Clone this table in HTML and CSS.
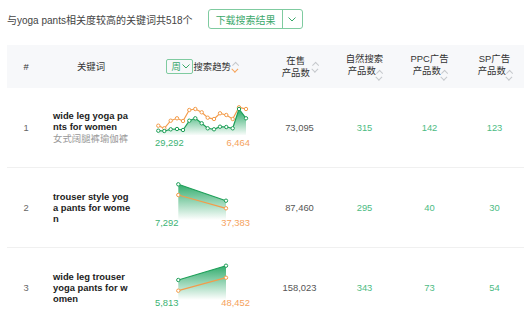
FILE: index.html
```html
<!DOCTYPE html>
<html lang="zh">
<head>
<meta charset="utf-8">
<link rel="stylesheet" href="styles.css">
</head>
<body>
<div class="page">
  <div class="top">
    <span class="summary">与yoga pants相关度较高的关键词共518个</span>
    <div class="dl">
      <span class="dl-main">下载搜索结果</span>
      <span class="dl-arrow"><svg width="8" height="5" viewBox="0 0 8 5"><path d="M0.5 0.5 L4 4 L7.5 0.5" fill="none" stroke="#3aa86a" stroke-width="1"/></svg></span>
    </div>
  </div>

  <div class="table">
    <div class="row head">
      <div class="c c-num">#</div>
      <div class="c c-center">关键词</div>
      <div class="c c-center trend-h">
        <span class="week">周<svg width="8" height="5" viewBox="0 0 8 5"><path d="M0.5 0.5 L4 4 L7.5 0.5" fill="none" stroke="#3aa86a" stroke-width="1"/></svg></span><span>搜索趋势</span><span class="sort active"><i class="up"></i><i class="down"></i></span>
      </div>
      <div class="c c-center"><span class="h2">在售<br>产品数</span><span class="sort mid"><i class="up"></i><i class="down"></i></span></div>
      <div class="c c-center"><span class="h2">自然搜索<br>产品数<span class="sort"><i class="up"></i><i class="down"></i></span></span></div>
      <div class="c c-center"><span class="h2">PPC广告<br>产品数<span class="sort"><i class="up"></i><i class="down"></i></span></span></div>
      <div class="c c-center"><span class="h2">SP广告<br>产品数<span class="sort"><i class="up"></i><i class="down"></i></span></span></div>
    </div>

    <div class="row">
      <div class="c c-num idx">1</div>
      <div class="c c-kw"><div class="kw">wide leg yoga pants for women</div><div class="kw-cn">女式阔腿裤瑜伽裤</div></div>
      <div class="c c-center">
        <div class="chart">
          <svg width="96" height="33" viewBox="0 0 96 33">
            <defs><linearGradient id="g1" x1="0" y1="0" x2="0" y2="1"><stop offset="0" stop-color="#1aa35c" stop-opacity="0.95"/><stop offset="1" stop-color="#1aa35c" stop-opacity="0.03"/></linearGradient></defs>
            <path d="M4.3,26.7 L10.3,27 L16.7,25.3 L23,25 L29,26 L35.3,16.7 L41.3,14.3 L47.7,19.3 L53.7,24.3 L60,25.3 L66,22.7 L72.3,23 L78.7,24.3 L85,5 L92,14.3 L92,31 L4.3,31 Z" fill="url(#g1)"/>
            <polyline points="4.3,21.7 10.3,24.3 16.7,16.7 23,14.3 29,17 35.3,6 41.3,5 47.7,8.3 53.7,13.7 60,15 66,9.3 72.3,11 78.7,15 85,3.3 92,5" fill="none" stroke="#f39c4b" stroke-width="1.2"/>
            <polyline points="4.3,26.7 10.3,27 16.7,25.3 23,25 29,26 35.3,16.7 41.3,14.3 47.7,19.3 53.7,24.3 60,25.3 66,22.7 72.3,23 78.7,24.3 85,5 92,14.3" fill="none" stroke="#1e9f58" stroke-width="1.2"/>
            <g fill="#fff" stroke="#f39c4b" stroke-width="1">
              <circle cx="4.3" cy="21.7" r="1.7"/><circle cx="10.3" cy="24.3" r="1.7"/><circle cx="16.7" cy="16.7" r="1.7"/><circle cx="23" cy="14.3" r="1.7"/><circle cx="29" cy="17" r="1.7"/><circle cx="35.3" cy="6" r="1.7"/><circle cx="41.3" cy="5" r="1.7"/><circle cx="47.7" cy="8.3" r="1.7"/><circle cx="53.7" cy="13.7" r="1.7"/><circle cx="60" cy="15" r="1.7"/><circle cx="66" cy="9.3" r="1.7"/><circle cx="72.3" cy="11" r="1.7"/><circle cx="78.7" cy="15" r="1.7"/><circle cx="85" cy="3.3" r="1.7"/><circle cx="92" cy="5" r="1.7"/>
            </g>
            <g fill="#fff" stroke="#1e9f58" stroke-width="1">
              <circle cx="4.3" cy="26.7" r="1.7"/><circle cx="10.3" cy="27" r="1.7"/><circle cx="16.7" cy="25.3" r="1.7"/><circle cx="23" cy="25" r="1.7"/><circle cx="29" cy="26" r="1.7"/><circle cx="35.3" cy="16.7" r="1.7"/><circle cx="41.3" cy="14.3" r="1.7"/><circle cx="47.7" cy="19.3" r="1.7"/><circle cx="53.7" cy="24.3" r="1.7"/><circle cx="60" cy="25.3" r="1.7"/><circle cx="66" cy="22.7" r="1.7"/><circle cx="72.3" cy="23" r="1.7"/><circle cx="78.7" cy="24.3" r="1.7"/><circle cx="85" cy="5" r="1.7"/><circle cx="92" cy="14.3" r="1.7"/>
            </g>
          </svg>
          <div class="labels"><span class="lg">29,292</span><span class="lo">6,464</span></div>
        </div>
      </div>
      <div class="c c-center val">73,095</div>
      <div class="c c-center val g">315</div>
      <div class="c c-center val g">142</div>
      <div class="c c-center val g">123</div>
    </div>

    <div class="row">
      <div class="c c-num idx">2</div>
      <div class="c c-kw"><div class="kw">trouser style yoga pants for women</div></div>
      <div class="c c-center">
        <div class="chart">
          <svg width="96" height="33" viewBox="0 0 96 33">
            <defs><linearGradient id="g2" x1="0" y1="0" x2="0" y2="1"><stop offset="0" stop-color="#1aa35c" stop-opacity="0.9"/><stop offset="1" stop-color="#1aa35c" stop-opacity="0"/></linearGradient></defs>
            <path d="M24.3,0.3 L72,16.7 L72,36 L24.3,36 Z" fill="url(#g2)"/>
            <line x1="24.3" y1="11" x2="72" y2="24.3" stroke="#f39c4b" stroke-width="1.2"/>
            <line x1="24.3" y1="0.3" x2="72" y2="16.7" stroke="#1e9f58" stroke-width="1.2"/>
            <g fill="#fff" stroke="#f39c4b" stroke-width="1"><circle cx="24.3" cy="11" r="1.7"/><circle cx="72" cy="24.3" r="1.7"/></g>
            <g fill="#fff" stroke="#1e9f58" stroke-width="1"><circle cx="24.3" cy="0.3" r="1.7"/><circle cx="72" cy="16.7" r="1.7"/></g>
          </svg>
          <div class="labels"><span class="lg">7,292</span><span class="lo">37,383</span></div>
        </div>
      </div>
      <div class="c c-center val">87,460</div>
      <div class="c c-center val g">295</div>
      <div class="c c-center val g">40</div>
      <div class="c c-center val g">30</div>
    </div>

    <div class="row">
      <div class="c c-num idx">3</div>
      <div class="c c-kw"><div class="kw">wide leg trouser yoga pants for women</div></div>
      <div class="c c-center">
        <div class="chart">
          <svg width="96" height="33" viewBox="0 0 96 33">
            <defs><linearGradient id="g3" x1="0" y1="0" x2="0" y2="1"><stop offset="0" stop-color="#1aa35c" stop-opacity="0.9"/><stop offset="1" stop-color="#1aa35c" stop-opacity="0"/></linearGradient></defs>
            <path d="M24.3,16 L72,1.7 L72,36 L24.3,36 Z" fill="url(#g3)"/>
            <line x1="24.3" y1="26.7" x2="72" y2="13.7" stroke="#f39c4b" stroke-width="1.2"/>
            <line x1="24.3" y1="16" x2="72" y2="1.7" stroke="#1e9f58" stroke-width="1.2"/>
            <g fill="#fff" stroke="#f39c4b" stroke-width="1"><circle cx="24.3" cy="26.7" r="1.7"/><circle cx="72" cy="13.7" r="1.7"/></g>
            <g fill="#fff" stroke="#1e9f58" stroke-width="1"><circle cx="24.3" cy="16" r="1.7"/><circle cx="72" cy="1.7" r="1.7"/></g>
          </svg>
          <div class="labels"><span class="lg">5,813</span><span class="lo">48,452</span></div>
        </div>
      </div>
      <div class="c c-center val">158,023</div>
      <div class="c c-center val g">343</div>
      <div class="c c-center val g">73</div>
      <div class="c c-center val g">54</div>
    </div>
  </div>
</div>
</body>
</html>
```

FILE: styles.css
```css
html, body {
  margin: 0;
  padding: 0;
  background: #fff;
  overflow: hidden;
}
body {
  font-family: "Liberation Sans", "Noto Sans CJK SC", sans-serif;
  color: #333;
}
.page {
  width: 524px;
  height: 327px;
  overflow: hidden;
  padding-left: 7px;
  box-sizing: border-box;
}
.top {
  display: flex;
  align-items: center;
  height: 20px;
  padding-top: 9px;
  gap: 15px;
}
.summary {
  font-size: 10px;
  color: #444;
  white-space: nowrap;
}
.dl {
  display: flex;
  height: 20px;
  box-sizing: border-box;
  border: 1px solid #7fcba0;
  border-radius: 3px;
  color: #3aa86a;
  font-size: 10px;
}
.dl-main {
  display: flex;
  align-items: center;
  padding: 0 6px 0 7px;
  border-right: 1px solid #7fcba0;
}
.dl-arrow {
  display: flex;
  align-items: center;
  justify-content: center;
  width: 19px;
}
.table {
  margin-top: 16px;
  width: 520px;
}
.row {
  display: grid;
  grid-template-columns: 38px 92px 130px 65px 65px 65px 65px;
  height: 80px;
  border-bottom: 1px solid #f0f0f0;
  box-sizing: border-box;
}
.row.head {
  height: 43px;
  background: #f7f8fa;
  border-bottom: none;
  font-size: 9.4px;
  line-height: 12px;
  color: #333;
}
.c {
  display: flex;
  align-items: center;
}
.c-num {
  justify-content: center;
}
.c-center {
  justify-content: center;
  text-align: center;
}
.idx {
  font-size: 9.4px;
  color: #666;
}
.c-kw {
  flex-direction: column;
  align-items: flex-start;
  justify-content: center;
  padding-left: 8px;
}
.kw {
  width: 78.5px;
  font-size: 9.4px;
  font-weight: bold;
  line-height: 11.3px;
  color: #222;
  word-break: break-all;
}
.kw-cn {
  margin-top: 1px;
  font-size: 9.4px;
  line-height: 12px;
  color: #999;
}
.trend-h {
  gap: 0;
}
.week {
  display: inline-flex;
  align-items: center;
  gap: 1px;
  height: 15px;
  width: 27px;
  box-sizing: border-box;
  padding-left: 4px;
  border: 1px solid #7fcba0;
  border-radius: 2px;
  color: #3aa86a;
}
.h2 {
  display: inline-block;
}
.sort {
  display: inline-flex;
  flex-direction: column;
  gap: 1px;
  margin-left: 1px;
  vertical-align: -1px;
}
.sort.mid {
  margin-left: 3px;
}
.sort i {
  display: block;
  width: 3.5px;
  height: 3.5px;
  border: solid #c5c8cc;
  border-width: 1px 1px 0 0;
}
.sort .up {
  transform: rotate(-45deg);
  margin-top: 1px;
}
.sort .down {
  transform: rotate(135deg);
  margin-top: -1px;
}
.sort.active .down {
  border-color: #f5a35a;
}
.sort.active {
  margin-left: 2px;
}
.chart {
  width: 96px;
  display: flex;
  flex-direction: column;
  margin-bottom: 3px;
}
.chart svg {
  display: block;
  overflow: visible;
}
.labels {
  display: flex;
  justify-content: space-between;
  font-size: 9.4px;
  line-height: 12px;
  padding: 0 0 0 1px;
}
.lg { color: #3bb273; }
.lo { color: #f5a25d; }
.val {
  font-size: 9.4px;
  color: #555;
}
.val.g {
  color: #4dbb83;
}
```
